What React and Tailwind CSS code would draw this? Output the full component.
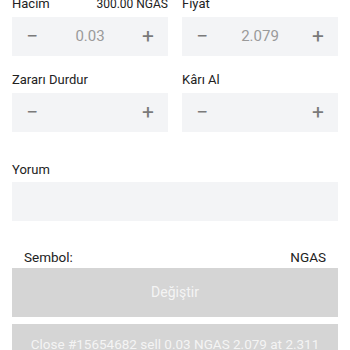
import React from "react";

function Stepper({ value }) {
  return (
    <div className="flex h-[39px] items-center justify-between bg-[#f3f4f6] pl-[13px] pr-[13px]">
      <span className="w-[14px] text-center text-[21px] leading-none text-[#7a7a7a]">−</span>
      <span className="text-[15px] text-[#9a9a9a]">{value}</span>
      <span className="w-[14px] text-center text-[21px] leading-none text-[#7a7a7a]">+</span>
    </div>
  );
}

function Field({ label, right, value }) {
  return (
    <div className="flex flex-col">
      <div className="flex h-[18px] items-center justify-between text-[13px] text-[#222]">
        <span>{label}</span>
        {right ? <span className="text-[12px]">{right}</span> : null}
      </div>
      <div className="mt-[4px]">
        <Stepper value={value} />
      </div>
    </div>
  );
}

export default function App() {
  return (
    <div
      className="h-[350px] w-[350px] overflow-hidden bg-white"
      style={{ fontFamily: "Roboto, 'Liberation Sans', sans-serif" }}
    >
      <div className="-mt-[5px] px-[12px]">
        <div className="grid grid-cols-2 gap-x-[14px] gap-y-[15px]">
          <Field label="Hacim" right="300.00 NGAS" value="0.03" />
          <Field label="Fiyat" value="2.079" />
          <Field label="Zararı Durdur" value="" />
          <Field label="Kârı Al" value="" />
        </div>
        <div className="mt-[29px] flex h-[18px] items-center text-[13px] text-[#222]">Yorum</div>
        <div className="mt-[3px] h-[39px] bg-[#f3f4f6]"></div>
        <div className="mt-[26px] flex h-[20px] items-center justify-between px-[12px] text-[13.5px] text-[#222]">
          <span>Sembol:</span>
          <span>NGAS</span>
        </div>
        <div className="mt-[1px] flex h-[49px] items-center justify-center bg-[#d5d5d5] text-[14px] text-[#f4f4f4]">
          Değiştir
        </div>
        <div className="mt-[7px] flex h-[40px] items-center justify-center bg-[#d5d5d5] text-[13.5px] text-[#f4f4f4]">
          Close #15654682 sell 0.03 NGAS 2.079 at 2.311
        </div>
      </div>
    </div>
  );
}
